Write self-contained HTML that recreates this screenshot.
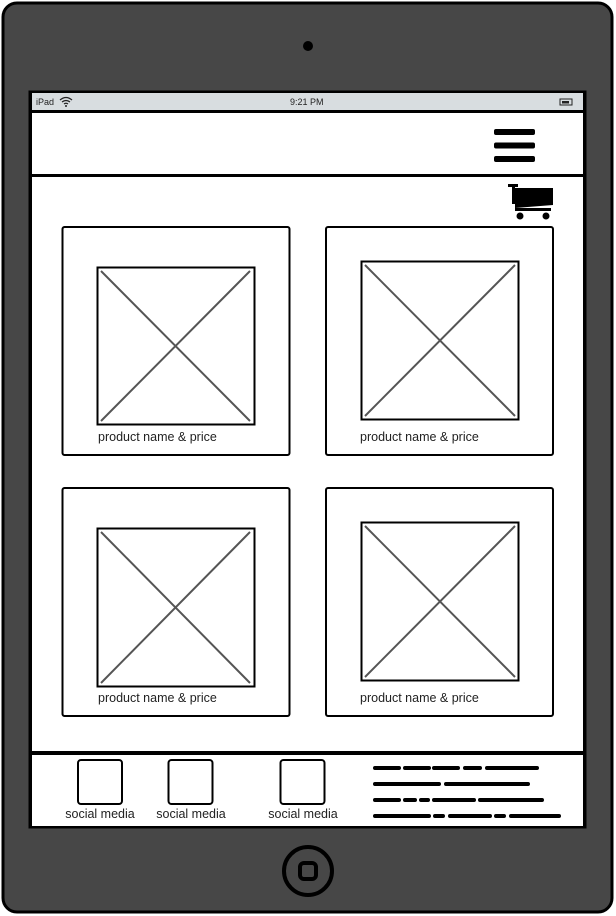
<!DOCTYPE html>
<html><head><meta charset="utf-8"><style>
html,body{margin:0;padding:0;background:#fff;width:616px;height:916px;overflow:hidden}
svg text{font-family:"Liberation Sans",sans-serif}
</style></head><body>
<svg width="616" height="916" viewBox="0 0 616 916" xmlns="http://www.w3.org/2000/svg">
<rect x="0" y="0" width="616" height="916" fill="#fff"/>
<rect x="3" y="3" width="609" height="909" rx="14" fill="#474747" stroke="#000" stroke-width="3"/>
<circle cx="308" cy="46" r="5" fill="#000"/>
<rect x="28.5" y="90.5" width="558" height="738" fill="#000"/>
<rect x="32" y="93" width="551" height="17" fill="#d8dde0"/>
<text x="36" y="105" font-size="9" fill="#222">iPad</text>
<path d="M60 100 q6 -5 12 0 M62 102 q4 -3 8 0 M64 104 q2 -1.5 4 0" stroke="#222" stroke-width="1.2" fill="none"/>
<circle cx="66" cy="106" r="1" fill="#222"/>
<text x="290" y="105" font-size="9" fill="#222">9:21 PM</text>
<rect x="560" y="99" width="12" height="6" fill="none" stroke="#222" stroke-width="1"/>
<rect x="562" y="101" width="7" height="2.5" fill="#222"/>
<rect x="32" y="113" width="551" height="61" fill="#fff"/>
<rect x="32" y="177" width="551" height="574" fill="#fff"/>
<rect x="32" y="755" width="551" height="71" fill="#fff"/>
<rect x="494" y="129" width="41" height="6" rx="2" fill="#000"/>
<rect x="494" y="142.5" width="41" height="6" rx="2" fill="#000"/>
<rect x="494" y="156" width="41" height="6" rx="2" fill="#000"/>
<path d="M508 184 h10 v3 h-3 v17 h-3 v-17 h-4 z" fill="#000"/>
<path d="M515 188 h38 v17 l-38 3 z" fill="#000"/>
<rect x="515" y="208" width="36" height="3" fill="#000"/>
<circle cx="520" cy="216" r="3.5" fill="#000"/><circle cx="546" cy="216" r="3.5" fill="#000"/>
<g fill="none" stroke="#000" stroke-width="2">
<rect x="62.5" y="227" width="227" height="228" rx="2"/>
<rect x="326" y="227" width="227" height="228" rx="2"/>
<rect x="62.5" y="488" width="227" height="228" rx="2"/>
<rect x="326" y="488" width="227" height="228" rx="2"/>
<rect x="97.5" y="267.5" width="157" height="157"/>
<rect x="361.5" y="261.5" width="157" height="158"/>
<rect x="97.5" y="528.5" width="157" height="158"/>
<rect x="361.5" y="522.5" width="157" height="158"/>
</g>
<g stroke="#555" stroke-width="2">
<path d="M101 271 L250 421 M250 271 L101 421"/>
<path d="M365 265 L515 416 M515 265 L365 416"/>
<path d="M101 532 L250 683 M250 532 L101 683"/>
<path d="M365 526 L515 677 M515 526 L365 677"/>
</g>
<g font-size="12.5" fill="#222">
<text x="98" y="441">product name &amp; price</text>
<text x="360" y="441">product name &amp; price</text>
<text x="98" y="702">product name &amp; price</text>
<text x="360" y="702">product name &amp; price</text>
</g>
<g fill="none" stroke="#000" stroke-width="2">
<rect x="78" y="760" width="44" height="44" rx="3"/>
<rect x="168.5" y="760" width="44" height="44" rx="3"/>
<rect x="280.5" y="760" width="44" height="44" rx="3"/>
</g>
<g font-size="12.5" fill="#222" text-anchor="middle">
<text x="100" y="818">social media</text>
<text x="191" y="818">social media</text>
<text x="303" y="818">social media</text>
</g>
<g stroke="#000" stroke-width="4" stroke-linecap="round">
<path d="M375 768h24 M405 768h24 M434 768h24 M465 768h15 M487 768h50"/>
<path d="M375 784h64 M446 784h82"/>
<path d="M375 800h24 M405 800h10 M421 800h7 M434 800h40 M480 800h62"/>
<path d="M375 816h54 M435 816h8 M450 816h40 M496 816h8 M511 816h48"/>
</g>
<circle cx="308" cy="871" r="24" fill="none" stroke="#000" stroke-width="4"/>
<rect x="300" y="863" width="16" height="16" rx="4" fill="none" stroke="#000" stroke-width="4"/>
</svg>
</body></html>
